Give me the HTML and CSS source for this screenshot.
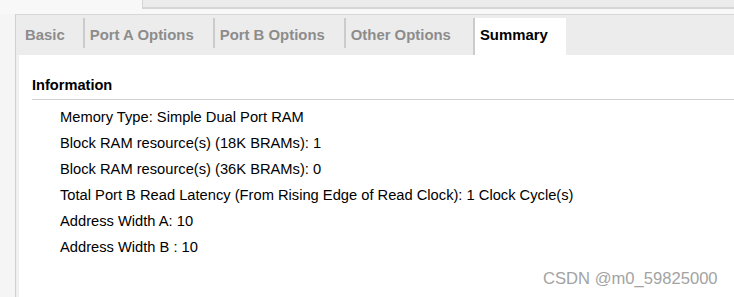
FILE: index.html
```html
<!DOCTYPE html>
<html>
<head>
<meta charset="utf-8">
<link rel="stylesheet" href="styles.css">
</head>
<body>
<div class="outer-tabs">
  <div class="outer-active"></div>
  <div class="outer-rest"></div>
</div>
<div class="outer-strip"></div>
<div class="frame">
  <div class="panel">
    <div class="tabbar">
      <div class="tab first">Basic</div>
      <div class="tab">Port A Options</div>
      <div class="tab">Port B Options</div>
      <div class="tab other">Other Options</div>
      <div class="tab active">Summary</div>
    </div>
    <div class="content">
      <div class="heading">Information</div>
      <div class="lines">
        <div class="line">Memory Type: Simple Dual Port RAM</div>
        <div class="line">Block RAM resource(s) (18K BRAMs): 1</div>
        <div class="line">Block RAM resource(s) (36K BRAMs): 0</div>
        <div class="line">Total Port B Read Latency (From Rising Edge of Read Clock): 1 Clock Cycle(s)</div>
        <div class="line">Address Width A: 10</div>
        <div class="line">Address Width B : 10</div>
      </div>
    </div>
  </div>
</div>
<div class="watermark">CSDN @m0_59825000</div>
</body>
</html>
```
FILE: styles.css
```css
html, body {
  margin: 0;
  padding: 0;
}
body {
  width: 734px;
  height: 297px;
  overflow: hidden;
  background: #f5f5f5;
  font-family: "Liberation Sans", Arial, sans-serif;
  position: relative;
}
.outer-tabs {
  display: flex;
  height: 9px;
}
.outer-active {
  width: 142px;
  background: #f8f8f8;
}
.outer-rest {
  flex: 1;
  background: #ececec;
  border-left: 1px solid #d4d4d4;
  border-bottom: 2px solid #d6d6d6;
}
.outer-strip {
  height: 5px;
  background: #f8f8f8;
}
.frame {
  padding-left: 15px;
}
.panel {
  border-top: 1px solid #d6d6d6;
  border-left: 1px solid #d0d0d0;
  background: #ececec;
  height: 283px;
}
.tabbar {
  display: flex;
  padding-top: 3px;
  height: 37px;
  background: #ececec;
}
.tab {
  font-size: 14.9px;
  font-weight: bold;
  color: #8c8c8c;
  line-height: 35px;
  padding: 0 19px 0 5px;
  border-left: 2px solid #cbcbcb;
  height: 30px;
}
.tab.first {
  border-left: none;
  padding-left: 9px;
  padding-right: 18px;
}
.tab.other {
  padding-right: 22px;
}
.tab.active {
  background: #ffffff;
  color: #000000;
  height: 37px;
  padding-right: 18px;
}
.content {
  background: #ffffff;
  height: 246px;
  padding: 22px 0 0 13px;
  border-left: 3px solid #f0f0f0;
  box-sizing: border-box;
}
.heading {
  font-size: 14.6px;
  font-weight: bold;
  color: #000;
  line-height: 17px;
  padding-bottom: 5px;
  border-bottom: 1px solid #d2d2d2;
}
.lines {
  padding: 4px 0 0 28px;
}
.line {
  font-size: 14.7px;
  line-height: 26px;
  color: #000;
  white-space: nowrap;
}
.watermark {
  position: absolute;
  left: 543px;
  top: 269px;
  font-size: 16.6px;
  line-height: 20px;
  color: #a3a3a3;
}
```
